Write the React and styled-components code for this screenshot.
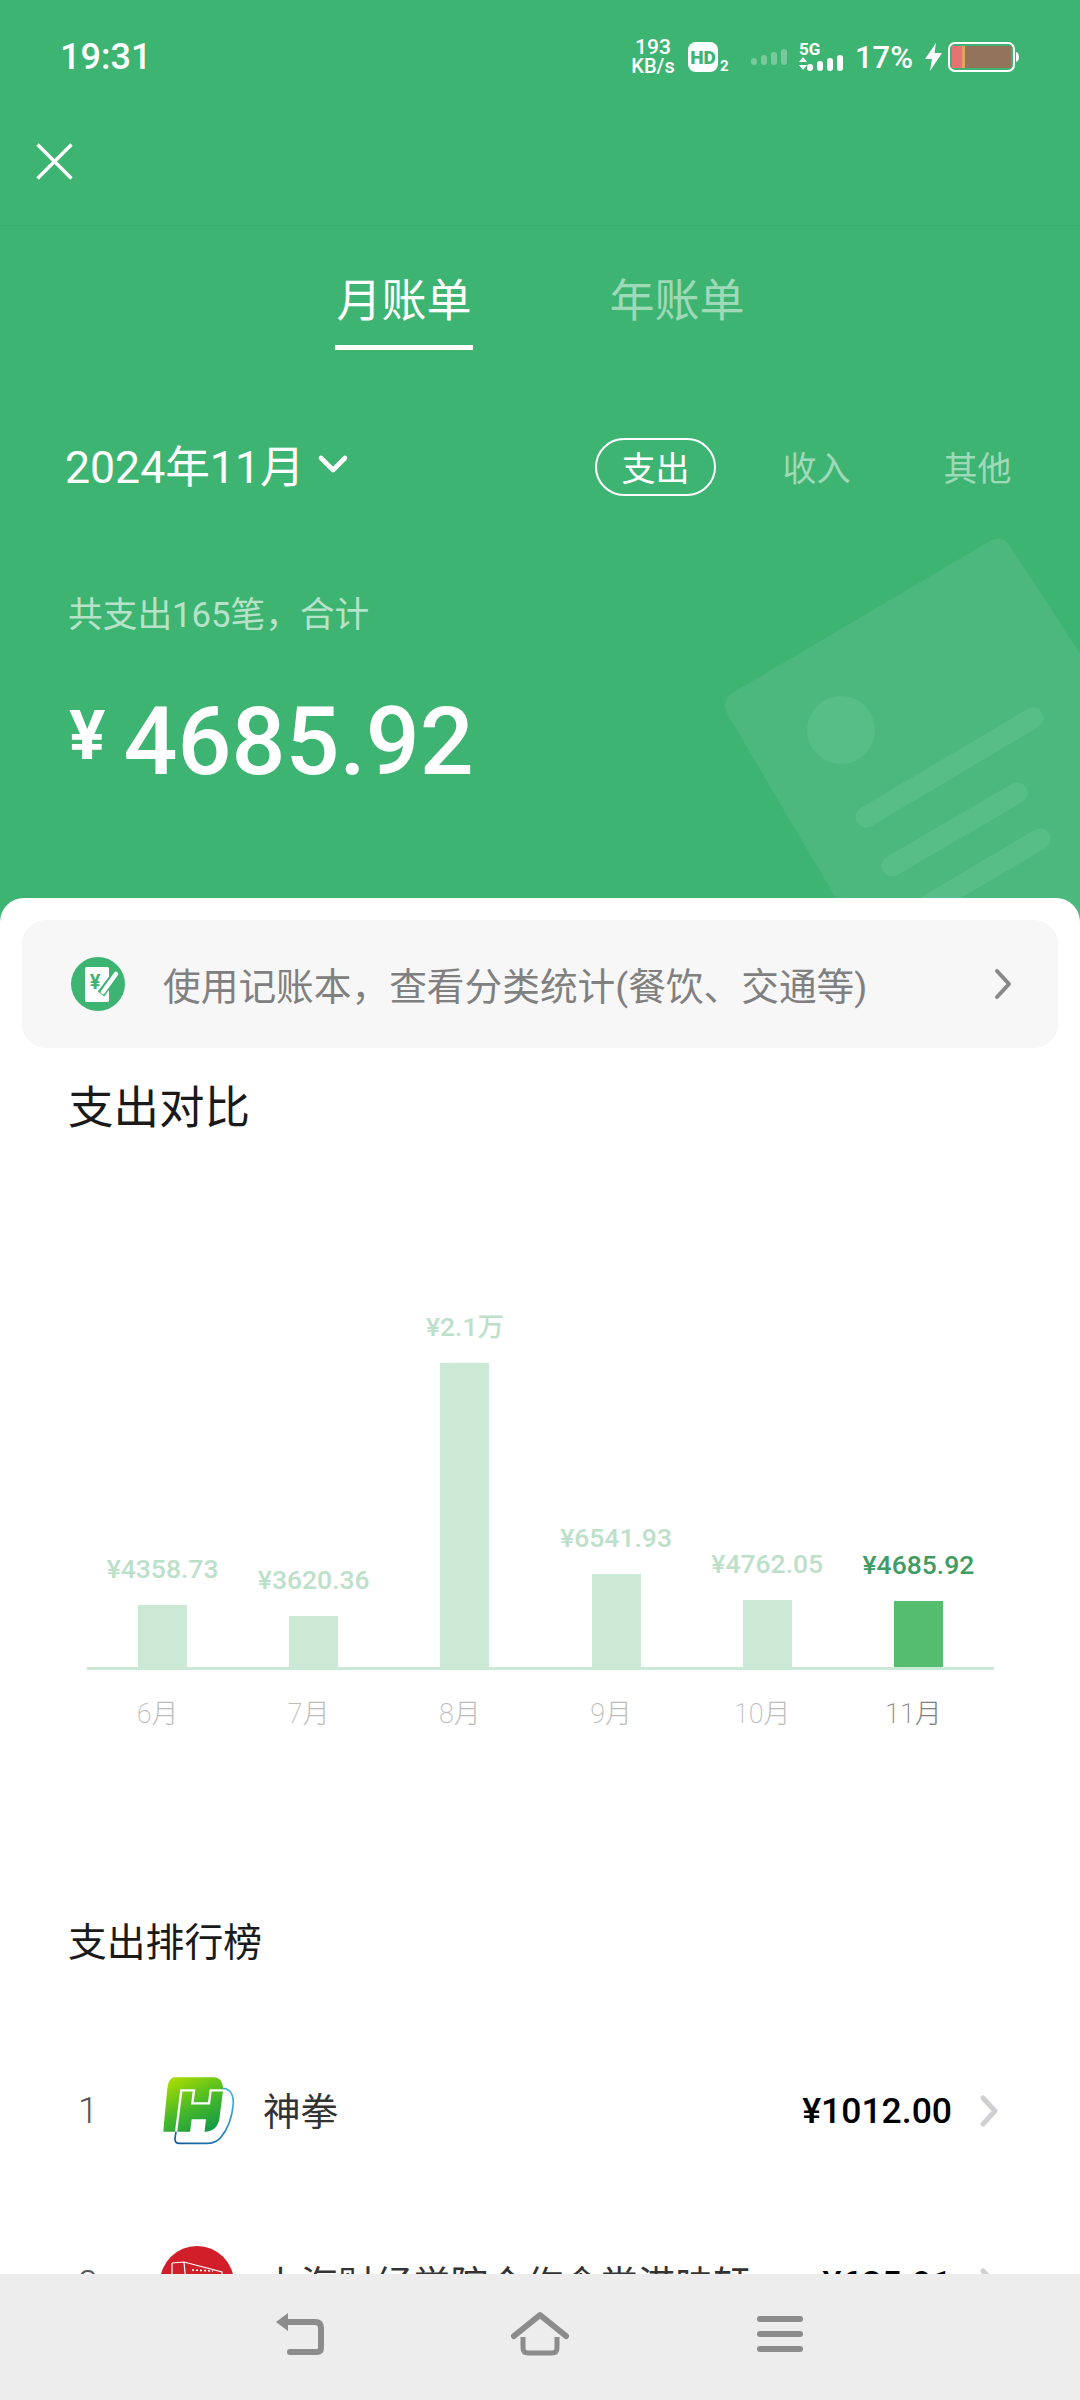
import React from "react";
import styled, { createGlobalStyle } from "styled-components";

const Global = createGlobalStyle`
  html, body { margin: 0; padding: 0; background: #fff; }
  * { box-sizing: border-box; }
  body { font-family: Roboto, "Noto Sans CJK SC", sans-serif; }
`;

const Screen = styled.div`
  width: 1080px;
  height: 2400px;
  display: flex;
  flex-direction: column;
  overflow: hidden;
  background: #fff;
`;
const Scroll = styled.div`
  flex: 1;
  min-height: 0;
  overflow: hidden;
`;
const Hero = styled.header`
  position: relative;
  height: 922px;
  background: #3eb472;
  color: #fff;
  overflow: hidden;
`;
const Watermark = styled.svg`
  position: absolute;
  left: 0;
  top: 0;
  width: 1080px;
  height: 922px;
`;
const HeroContent = styled.div`
  position: relative;
`;
const StatusBar = styled.div`
  height: 112px;
  padding: 2px 61px 0 60px;
  display: flex;
  align-items: center;
  justify-content: space-between;
`;
const Clock = styled.div`
  font-size: 36px;
  font-weight: 500;
`;
const StatusIcons = styled.div`
  display: flex;
  align-items: center;
`;
const NetSpeed = styled.div`
  width: 44px;
  display: flex;
  flex-direction: column;
  align-items: center;
  font-weight: 500;
  font-size: 21px;
  line-height: 19px;
  margin-right: 13px;
  small { font-size: 20px; }
`;
const BatteryText = styled.span`
  width: 58px;
  font-size: 31px;
  font-weight: 500;
  white-space: nowrap;
  margin: 0 12px;
`;
const Glyph = styled.svg`
  display: block;
  flex: none;
  overflow: visible;
  margin-left: ${(p) => p.$ml || 0}px;
`;
const TopBar = styled.div`
  height: 114px;
  padding: 0 0 14px 36px;
  display: flex;
  align-items: center;
  border-bottom: 1px solid rgba(0, 0, 0, 0.03);
`;
const Tabs = styled.nav`
  margin-top: 40px;
  padding-left: 1px;
  display: flex;
  justify-content: center;
  gap: 135px;
`;
const Tab = styled.div`
  width: 138px;
  text-align: center;
  font-size: 45px;
  line-height: 68px;
  padding: 2px 0 9px;
  border-bottom: 5px solid ${(p) => (p.$active ? "#fff" : "transparent")};
  color: ${(p) => (p.$active ? "#fff" : "rgba(255,255,255,0.5)")};
`;
const FilterRow = styled.div`
  margin-top: 87px;
  padding: 0 42px 0 65px;
  display: flex;
  align-items: center;
  justify-content: space-between;
`;
const DatePick = styled.div`
  display: flex;
  align-items: center;
  gap: 13px;
  font-size: 44.6px;
  margin-top: -6px;
`;
const Filters = styled.div`
  display: flex;
  gap: 40px;
`;
const Filter = styled.div`
  width: 121px;
  height: 58px;
  display: flex;
  align-items: center;
  justify-content: center;
  font-size: 34px;
  border-radius: 29px;
  border: 2px solid ${(p) => (p.$active ? "#fff" : "transparent")};
  color: ${(p) => (p.$active ? "#fff" : "rgba(255,255,255,0.5)")};
`;
const SumLabel = styled.div`
  margin-top: 94px;
  padding-left: 68px;
  font-size: 34.7px;
  line-height: 50px;
  color: rgba(255, 255, 255, 0.65);
`;
const Total = styled.div`
  margin-top: 54px;
  padding-left: 69px;
  display: flex;
  align-items: flex-start;
  gap: 18px;
  font-weight: 500;
`;
const TotalSign = styled.span`
  font-size: 68px;
  font-weight: 700;
  line-height: 96px;
  margin-top: -6px;
`;
const TotalValue = styled.span`
  font-size: 95px;
  line-height: 96px;
`;
const Sheet = styled.main`
  position: relative;
  margin-top: -24px;
  padding-top: 22px;
  background: #fff;
  border-radius: 24px 24px 0 0;
`;
const Banner = styled.div`
  margin: 0 22px;
  height: 128px;
  padding: 0 46px 0 48px;
  display: flex;
  align-items: center;
  background: #f7f7f7;
  border-radius: 24px;
`;
const BannerText = styled.div`
  flex: 1;
  margin: -2px 0 0 37px;
  font-size: 37.7px;
  color: #808080;
  white-space: nowrap;
`;
const Title = styled.h2`
  margin: ${(p) => p.$mt}px 0 0;
  padding-left: 68px;
  font-weight: 400;
  font-size: ${(p) => p.$size}px;
  line-height: ${(p) => p.$lh}px;
  color: #1a1a1a;
`;
const Plot = styled.div`
  margin: 153px 86px 0 87px;
  height: 378px;
  display: grid;
  grid-template-columns: repeat(6, 1fr);
  border-bottom: 3px solid #cbe9d6;
`;
const Col = styled.div`
  display: flex;
  flex-direction: column;
  justify-content: flex-end;
  align-items: center;
`;
const ValueLabel = styled.div`
  font-size: 26.5px;
  font-weight: 500;
  line-height: 30px;
  margin-bottom: 21px;
  white-space: nowrap;
  color: ${(p) => (p.$active ? "#3f9c63" : "#bde0ca")};
`;
const Bar = styled.div`
  width: 49px;
  background: ${(p) => (p.$active ? "#55bd70" : "#cbe9d4")};
`;
const Months = styled.div`
  margin: 24px 91px 0 82px;
  display: grid;
  grid-template-columns: repeat(6, 1fr);
`;
const Month = styled.div`
  text-align: center;
  font-size: 27px;
  font-weight: 200;
  line-height: 40px;
  color: ${(p) => (p.$active ? "#808080" : "#bdbdbd")};
`;
const RankList = styled.div`
  margin-top: 56px;
`;
const Row = styled.div`
  height: 173px;
  padding: 0 82px 0 78px;
  display: flex;
  align-items: center;
`;
const Rank = styled.div`
  width: 82px;
  font-size: 36px;
  font-weight: 300;
  color: #555;
`;
const Logo = styled.svg`
  display: block;
  flex: none;
  width: 80px;
  height: 80px;
`;
const Name = styled.div`
  flex: 1;
  margin: -4px 0 0 23px;
  font-size: 37.5px;
  color: #333;
  white-space: nowrap;
  overflow: hidden;
`;
const Amount = styled.div`
  font-size: 35.5px;
  font-weight: 500;
  color: #000;
  margin-right: 28px;
  white-space: nowrap;
`;
const BottomNav = styled.nav`
  flex: none;
  height: 126px;
  background: #ededed;
  display: flex;
  justify-content: center;
  align-items: flex-start;
  padding-top: 38px;
`;
const NavSlot = styled.div`
  width: 240px;
  height: 44px;
  display: flex;
  justify-content: center;
  align-items: center;
`;

const chart = [
  { m: "6月", label: "¥4358.73", v: 4358.73 },
  { m: "7月", label: "¥3620.36", v: 3620.36 },
  { m: "8月", label: "¥2.1万", v: 21000 },
  { m: "9月", label: "¥6541.93", v: 6541.93 },
  { m: "10月", label: "¥4762.05", v: 4762.05 },
  { m: "11月", label: "¥4685.92", v: 4685.92, active: true },
];

const Chevron = ({ color, w = 18, h = 30, sw = 4 }) => (
  <Glyph width={w} height={h} viewBox="0 0 18 30" fill="none">
    <path d="M3 2 L15 15 L3 28" stroke={color} strokeWidth={sw} strokeLinecap="round" strokeLinejoin="round" />
  </Glyph>
);

const Signal = ({ opacity }) => (
  <g fill="#fff" opacity={opacity}>
    <rect x="0" y="9" width="6" height="7" rx="3" />
    <rect x="10" y="6" width="6" height="10" rx="3" />
    <rect x="20" y="3" width="6" height="13" rx="3" />
    <rect x="30" y="0" width="6" height="16" rx="3" />
  </g>
);

export default function App() {
  return (
    <Screen>
      <Global />
      <Scroll>
        <Hero>
          <Watermark viewBox="0 0 1080 922" fill="none">
            <path
              d="M990 541 Q1002 534 1010 546 L1110 700 L1110 922 L850 922 L728 715 Q720 701 734 692 Z"
              fill="#4cb87d"
            />
            <circle cx="841" cy="730" r="34" fill="#58be87" />
            <g stroke="#58be87" strokeWidth="21" strokeLinecap="round">
              <path d="M1033 718 L866 817" />
              <path d="M1017 793 L892 866" />
              <path d="M1040 839 L920 910" />
            </g>
          </Watermark>
          <HeroContent>
            <StatusBar>
              <Clock>19:31</Clock>
              <StatusIcons>
                <NetSpeed>
                  <span>193</span>
                  <small>KB/s</small>
                </NetSpeed>
                <Glyph width="44" height="30" viewBox="0 0 44 30">
                  <rect x="0" y="0" width="30" height="30" rx="8" fill="#fff" />
                  <text x="15" y="22" textAnchor="middle" fontFamily="Roboto" fontWeight="900" fontSize="19" fill="#3eb472">HD</text>
                  <text x="32" y="29" fontFamily="Roboto" fontWeight="700" fontSize="15" fill="#fff">2</text>
                </Glyph>
                <Glyph $ml={19} width="36" height="16" viewBox="0 0 36 16">
                  <Signal opacity={0.3} />
                </Glyph>
                <Glyph $ml={12} width="44" height="30" viewBox="0 0 44 30">
                  <text x="0" y="13" fontFamily="Roboto" fontWeight="700" fontSize="17" fill="#fff">5G</text>
                  <path d="M0 20 L4 15 L8 20 Z M0 23 L8 23 L4 28 Z" fill="#fff" />
                  <g transform="translate(8 13)">
                    <Signal opacity={1} />
                  </g>
                </Glyph>
                <BatteryText>17%</BatteryText>
                <Glyph width="17" height="28" viewBox="0 0 17 28">
                  <path d="M11 0 L0 16 L7 16 L5 28 L17 10 L9.5 10 Z" fill="#fff" />
                </Glyph>
                <Glyph $ml={6} width="71" height="30" viewBox="0 0 71 30">
                  <rect x="1" y="1" width="65" height="28" rx="6" fill="none" stroke="#fff" strokeWidth="2" />
                  <rect x="4" y="4" width="10" height="22" fill="#e57373" />
                  <rect x="14" y="4" width="3" height="22" fill="#dfa45f" />
                  <rect x="17" y="4" width="46" height="22" fill="#92735b" />
                  <path d="M68 10 Q71 11 71 15 Q71 19 68 20 Z" fill="#fff" />
                </Glyph>
              </StatusIcons>
            </StatusBar>
            <TopBar>
              <Glyph width="37" height="37" viewBox="0 0 37 37" fill="none">
                <path d="M1.5 1.5 L35.5 35.5 M35.5 1.5 L1.5 35.5" stroke="#fff" strokeWidth="3.4" />
              </Glyph>
            </TopBar>
            <Tabs>
              <Tab $active>月账单</Tab>
              <Tab>年账单</Tab>
            </Tabs>
            <FilterRow>
              <DatePick>
                2024年11月
                <Glyph width="30" height="20" viewBox="0 0 30 20" fill="none">
                  <path d="M3 4 L15 16 L27 4" stroke="#fff" strokeWidth="4.6" strokeLinecap="round" strokeLinejoin="round" />
                </Glyph>
              </DatePick>
              <Filters>
                <Filter $active>支出</Filter>
                <Filter>收入</Filter>
                <Filter>其他</Filter>
              </Filters>
            </FilterRow>
            <SumLabel>共支出165笔，合计</SumLabel>
            <Total>
              <TotalSign>¥</TotalSign>
              <TotalValue>4685.92</TotalValue>
            </Total>
          </HeroContent>
        </Hero>
        <Sheet>
          <Banner>
            <Glyph width="56" height="56" viewBox="0 0 56 56">
              <circle cx="28" cy="28" r="27" fill="#3eb472" />
              <rect x="15" y="11" width="24" height="35" rx="1.5" fill="#fff" />
              <text x="25" y="33" textAnchor="middle" fontFamily="Roboto" fontWeight="700" fontSize="20" fill="#3eb472">¥</text>
              <path d="M46 18 L31 38" stroke="#3eb472" strokeWidth="8" />
              <path d="M46 18 L33 36" stroke="#fff" strokeWidth="4.5" strokeLinecap="round" />
            </Glyph>
            <BannerText>使用记账本，查看分类统计(餐饮、交通等)</BannerText>
            <Chevron color="#888" />
          </Banner>
          <Title $mt={31} $size={45.5} $lh={60}>支出对比</Title>
          <Plot>
            {chart.map((c) => (
              <Col key={c.m}>
                <ValueLabel $active={c.active}>{c.label}</ValueLabel>
                <Bar $active={c.active} style={{ height: Math.round((c.v * 306) / 21000) - 2 }} />
              </Col>
            ))}
          </Plot>
          <Months>
            {chart.map((c) => (
              <Month key={c.m} $active={c.active}>{c.m}</Month>
            ))}
          </Months>
          <Title $mt={184} $size={38.8} $lh={50}>支出排行榜</Title>
          <RankList>
            <Row>
              <Rank>1</Rank>
              <Logo viewBox="60 33 240 240" fill="none">
                <defs>
                  <linearGradient id="hg" x1="0.2" y1="0" x2="0.75" y2="1">
                    <stop offset="0" stopColor="#a8dc00" />
                    <stop offset="0.55" stopColor="#46b82a" />
                    <stop offset="1" stopColor="#149a46" />
                  </linearGradient>
                  <linearGradient id="hb" x1="1" y1="0" x2="0" y2="1">
                    <stop offset="0" stopColor="#3fb6e0" />
                    <stop offset="1" stopColor="#13569c" />
                  </linearGradient>
                </defs>
                <path d="M102 52 H222 Q246 52 250 85 L238 178 Q230 215 195 215 H70 L72 190 L82 85 Q86 55 102 52 Z" fill="url(#hg)" />
                <path d="M108 218 L124 91 H162 L157 130 H207 L212 91 H252" stroke="#fff" strokeWidth="7" />
                <path d="M150 218 L155 178 H198 L193 218 Z" fill="#fff" />
                <path d="M248 86 H258 Q282 95 280 130 Q275 195 240 235 Q225 250 200 250 H118 Q104 250 105 235 L108 215" stroke="url(#hb)" strokeWidth="5" />
              </Logo>
              <Name>神拳</Name>
              <Amount>¥1012.00</Amount>
              <Chevron color="#cfcfd4" sw={5} />
            </Row>
            <Row>
              <Rank>2</Rank>
              <Logo viewBox="0 0 80 80" fill="none">
                <circle cx="37" cy="39" r="37" fill="#d11f2a" />
                <path d="M12 19 L24 18 L62 28 V60 M12 19 V60 M24 18 L28 60" stroke="#fff" strokeWidth="1.2" />
                <path d="M32 26 L53 27" stroke="#fff" strokeWidth="1.6" strokeDasharray="2 2" />
              </Logo>
              <Name>上海财经学院合作食堂港味轩</Name>
              <Amount>¥625.91</Amount>
              <Chevron color="#cfcfd4" sw={5} />
            </Row>
          </RankList>
        </Sheet>
      </Scroll>
      <BottomNav>
        <NavSlot>
          <Glyph width="50" height="44" viewBox="0 0 50 44" fill="none">
            <path d="M1 10 L13 1 V19 Z" fill="#8c8c8c" />
            <path d="M10 10 H40 Q46 10 46 16 V36 Q46 40 42 40 H15" stroke="#8c8c8c" strokeWidth="6" strokeLinecap="round" />
          </Glyph>
        </NavSlot>
        <NavSlot>
          <Glyph width="58" height="44" viewBox="0 0 58 44" fill="none">
            <path d="M3 24 L29 3 L55 24" stroke="#8c8c8c" strokeWidth="6" strokeLinecap="round" strokeLinejoin="round" />
            <path d="M12 25 V36 Q12 41 17 41 H41 Q46 41 46 36 V25" stroke="#8c8c8c" strokeWidth="5" />
          </Glyph>
        </NavSlot>
        <NavSlot>
          <Glyph width="46" height="38" viewBox="0 0 46 38" fill="#8c8c8c">
            <rect x="0" y="1" width="46" height="6" rx="3" />
            <rect x="0" y="16" width="46" height="6" rx="3" />
            <rect x="0" y="31" width="46" height="6" rx="3" />
          </Glyph>
        </NavSlot>
      </BottomNav>
    </Screen>
  );
}
